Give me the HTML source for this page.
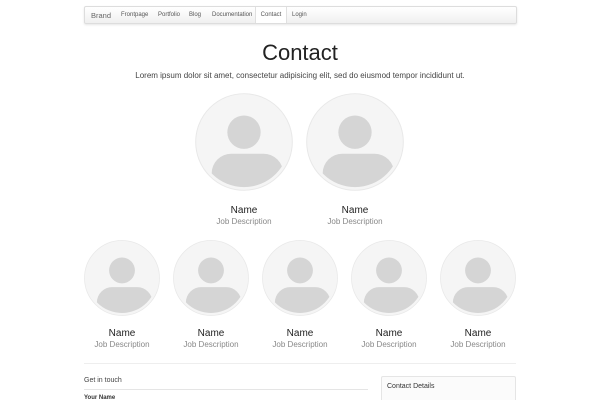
<!DOCTYPE html>
<html><head><style>
html,body{margin:0;height:400px;overflow:hidden}
body{background:#fff;font-family:"Liberation Sans",sans-serif;color:#333;width:600px;position:relative}
.nav{position:absolute;left:84px;top:6px;width:431px;height:16px;border:1px solid #ddd;border-radius:2px;background:linear-gradient(#fff,#f0f0f0);box-shadow:0 1px 2px rgba(0,0,0,.1);font-size:6px;color:#555}
.nav span{position:absolute;top:5px}
.nav .brand{font-size:7.5px;top:3.5px;left:6px;color:#666}
.nav .act{top:0;height:16px;line-height:16px;width:32px;text-align:center;background:#fff;border-left:1px solid #e0e0e0;border-right:1px solid #e0e0e0;box-sizing:border-box}
h1{position:absolute;top:40px;left:0;width:600px;text-align:center;font-weight:normal;font-size:22px;margin:0;color:#222}
.lead{position:absolute;top:71px;left:0;width:600px;text-align:center;font-size:8px;color:#444}
.av{position:absolute}
.nm{position:absolute;text-align:center;width:100px;font-size:10px;color:#222}
.jd{position:absolute;text-align:center;width:100px;font-size:8px;color:#888}
.hr{position:absolute;left:84px;width:432px;height:1px;background:#eee}
</style></head><body>
<div class="nav">
<span class="brand">Brand</span>
<span style="left:36px">Frontpage</span>
<span style="left:73px">Portfolio</span>
<span style="left:104px">Blog</span>
<span style="left:127px">Documentation</span>
<span class="act" style="left:170px">Contact</span>
<span style="left:207px">Login</span>
</div>
<h1>Contact</h1>
<div class="lead">Lorem ipsum dolor sit amet, consectetur adipisicing elit, sed do eiusmod tempor incididunt ut.</div>
<svg width="0" height="0" style="position:absolute"><defs>
<clipPath id="c"><circle cx="50" cy="50" r="46"/></clipPath>
<symbol id="a" viewBox="0 0 100 100">
<circle cx="50" cy="50" r="49.3" fill="#f5f5f5" stroke="#e8e8e8" stroke-width="1"/>
<g clip-path="url(#c)" fill="#d5d5d5">
<circle cx="50" cy="40" r="17"/>
<rect x="17" y="62" width="73" height="50" rx="20"/>
</g></symbol></defs></svg>
<svg class="av" style="left:195px;top:93px" width="98" height="98"><use href="#a"/></svg>
<svg class="av" style="left:306px;top:93px" width="98" height="98"><use href="#a"/></svg>
<div class="nm" style="left:194px;top:205px">Name</div><div class="jd" style="left:194px;top:217px">Job Description</div>
<div class="nm" style="left:305px;top:205px">Name</div><div class="jd" style="left:305px;top:217px">Job Description</div>
<svg class="av" style="left:84px;top:240px" width="76" height="76"><use href="#a"/></svg>
<svg class="av" style="left:173px;top:240px" width="76" height="76"><use href="#a"/></svg>
<svg class="av" style="left:262px;top:240px" width="76" height="76"><use href="#a"/></svg>
<svg class="av" style="left:351px;top:240px" width="76" height="76"><use href="#a"/></svg>
<svg class="av" style="left:440px;top:240px" width="76" height="76"><use href="#a"/></svg>
<div class="nm" style="left:72px;top:328px">Name</div><div class="jd" style="left:72px;top:340px">Job Description</div>
<div class="nm" style="left:161px;top:328px">Name</div><div class="jd" style="left:161px;top:340px">Job Description</div>
<div class="nm" style="left:250px;top:328px">Name</div><div class="jd" style="left:250px;top:340px">Job Description</div>
<div class="nm" style="left:339px;top:328px">Name</div><div class="jd" style="left:339px;top:340px">Job Description</div>
<div class="nm" style="left:428px;top:328px">Name</div><div class="jd" style="left:428px;top:340px">Job Description</div>
<div class="hr" style="top:363px"></div>
<div style="position:absolute;left:84px;top:377px;font-size:7px;color:#444">Get in touch</div>
<div style="position:absolute;left:84px;top:389px;width:284px;height:1px;background:#e5e5e5"></div>
<div style="position:absolute;left:84px;top:395px;font-size:6px;color:#333;font-weight:bold">Your Name</div>
<div style="position:absolute;left:381px;top:376px;width:133px;height:30px;border:1px solid #e5e5e5;border-radius:2px;background:#fbfbfb"></div>
<div style="position:absolute;left:387px;top:383px;font-size:7px;color:#333">Contact Details</div>
</body></html>
